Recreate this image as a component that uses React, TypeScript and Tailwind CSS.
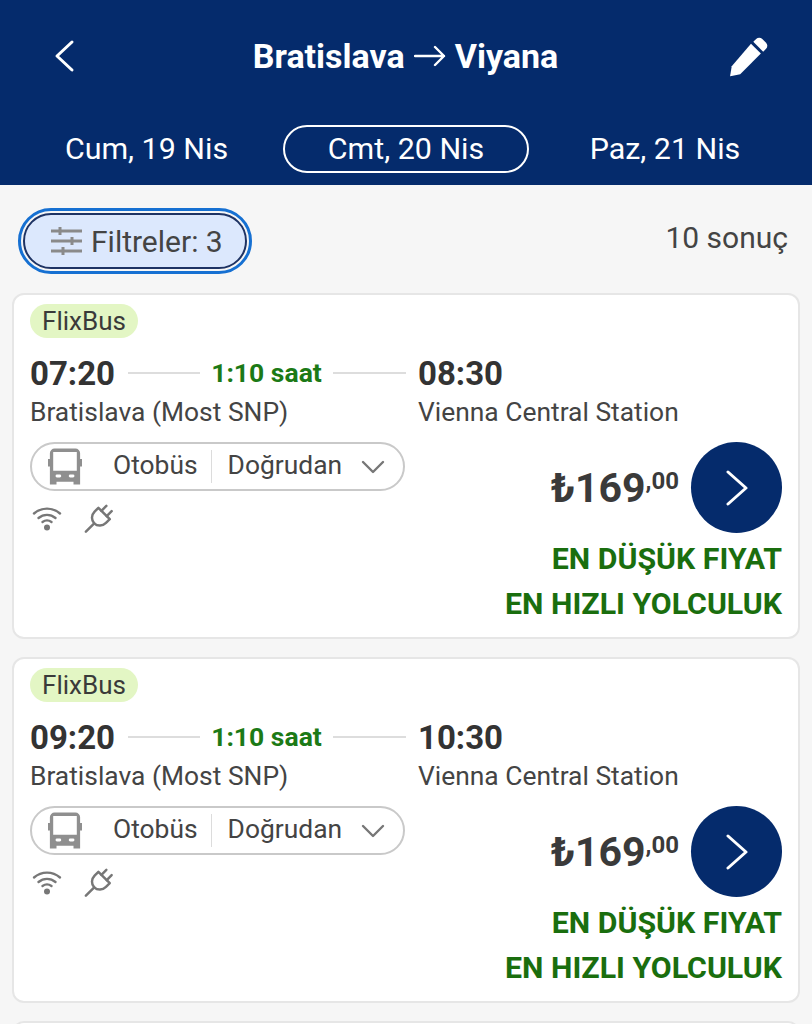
import React from "react";

function BusIcon() {
  return (
    <svg width="34" height="38" viewBox="0 0 36 39" className="shrink-0">
      <path fillRule="evenodd" fill="#8f8f8f" d="M7 0h22a5 5 0 0 1 5 5v6h2v8h-2v19h-7v-3H9v3H2V19H0v-8h2V5a5 5 0 0 1 5-5zM5.500 3.500v20h25v-20z" />
      <rect x="8" y="27.500" width="6" height="3" rx="1.500" fill="#fff" />
      <rect x="22" y="27.500" width="6" height="3" rx="1.500" fill="#fff" />
    </svg>
  );
}

function WifiIcon() {
  return (
    <svg width="30" height="26" viewBox="0 0 30 26" fill="none" stroke="#777" strokeWidth="2.4" strokeLinecap="round">
      <path d="M2 8.500C9.500 2 20.500 2 28 8.500" />
      <path d="M6.500 13c5-4.200 12-4.200 17 0" />
      <path d="M10.500 17c2.800-2 6.200-2 9 0" />
      <circle cx="15" cy="22.500" r="3" fill="#777" stroke="none" />
    </svg>
  );
}

function PlugIcon() {
  return (
    <svg width="30" height="30" viewBox="1 1 27 28" fill="none" stroke="#777" strokeWidth="2.3" strokeLinecap="round" strokeLinejoin="round">
      <g transform="rotate(45 15 15)">
        <path d="M15 22v11" />
        <path d="M7.500 9h15v5a7.500 8 0 0 1-15 0z" />
        <path d="M11.500 9V2.500M18.500 9V2.500" />
      </g>
    </svg>
  );
}

function Card({ dep, arr }: { dep: string; arr: string }) {
  return (
    <div className="h-[346px] shrink-0 rounded-[12px] border-2 border-[#e6e6e6] bg-white pl-[16px] pr-[16px] pt-[9px]">
      <div className="flex">
        <span className="flex h-[34px] w-[108px] items-center justify-center rounded-full bg-[#e3f6c4] text-[26px] text-[#3a3a3a]">FlixBus</span>
      </div>
      <div className="mt-[16px] flex">
        <div className="w-[388px] shrink-0">
          <div className="flex h-[38px] items-center">
            <span className="w-[98px] text-[33px] font-bold leading-none text-[#333]">{dep}</span>
            <span className="h-[2px] w-[72px] bg-[#dddddd]" />
            <span className="w-[133px] text-center text-[26.5px] font-bold leading-none text-[#1c7a16]">1:10 saat</span>
            <span className="h-[2px] w-[73px] bg-[#dddddd]" />
          </div>
          <div className="mt-[4px] text-[26.4px] leading-[32px] text-[#444]">Bratislava (Most SNP)</div>
        </div>
        <div>
          <div className="flex h-[38px] items-center text-[33px] font-bold leading-none text-[#333]">{arr}</div>
          <div className="mt-[4px] whitespace-nowrap text-[26.4px] leading-[32px] text-[#444]">Vienna Central Station</div>
        </div>
      </div>
      <div className="mt-[14px] flex justify-between">
        <div>
          <div className="flex h-[49px] w-[375px] items-center rounded-full border-2 border-[#c9c9c9] pl-[16px] text-[26.4px] text-[#444]">
            <BusIcon />
            <span className="mb-[2px] ml-[31px]">Otobüs</span>
            <span className="ml-[13px] h-[33px] w-[1px] bg-[#dcdcdc]" />
            <span className="mb-[2px] ml-[16px]">Doğrudan</span>
            <svg width="24" height="14" viewBox="0 0 24 14" fill="none" stroke="#777" strokeWidth="2.4" strokeLinecap="round" strokeLinejoin="round" className="ml-[19px]">
              <path d="M2 2l10 10L22 2" />
            </svg>
          </div>
          <div className="mt-[12px] flex items-center gap-[22px] pl-[2px]">
            <WifiIcon />
            <PlugIcon />
          </div>
        </div>
        <div className="flex flex-col items-end">
          <div className="flex items-center">
            <span className="flex items-start text-[#3a3a3a]">
              <span className="text-[41px] font-bold leading-[48px]">₺169</span>
              <span className="mt-[-1px] text-[24px] font-bold leading-[36px]">,00</span>
            </span>
            <span className="ml-[12px] flex h-[91px] w-[91px] items-center justify-center rounded-full bg-[#052b6c]">
              <svg width="26" height="36" viewBox="0 0 26 36" fill="none" stroke="#fff" strokeWidth="3" strokeLinecap="round" strokeLinejoin="round">
                <path d="M4 2l18 16L4 34" />
              </svg>
            </span>
          </div>
          <div className="mt-[3px] whitespace-nowrap text-[30.3px] font-bold leading-[45px] text-[#1a6e0e]">EN DÜŞÜK FIYAT</div>
          <div className="whitespace-nowrap text-[30.3px] font-bold leading-[45px] text-[#1a6e0e]">EN HIZLI YOLCULUK</div>
        </div>
      </div>
    </div>
  );
}

export default function App() {
  return (
    <div className="h-[1024px] w-[812px] overflow-hidden bg-[#f6f6f6] font-['Roboto',sans-serif]">
      <header className="h-[185px] bg-[#052b6c] text-white">
        <div className="flex h-[112px] items-center justify-between pl-[52px] pr-[41px]">
          <svg width="24" height="34" viewBox="0 0 24 34" fill="none" stroke="#fff" strokeWidth="3" strokeLinecap="round" strokeLinejoin="round">
            <path d="M20 3L5 17l15 14" />
          </svg>
          <h1 className="ml-[8px] flex items-center gap-[9px] text-[34px] font-bold leading-none">
            <span>Bratislava</span>
            <svg width="32" height="22" viewBox="0 0 32 22" fill="none" stroke="#fff" strokeWidth="2.4" strokeLinecap="round" strokeLinejoin="round">
              <path d="M1 11h29M21 2l9 9-9 9" />
            </svg>
            <span>Viyana</span>
          </h1>
          <svg width="44" height="44" viewBox="0 0 40 40" fill="#fff">
            <path d="M26.500 4.500a4 4 0 0 1 5.600 0l3.400 3.400a4 4 0 0 1 0 5.600l-2.600 2.600-9-9z" />
            <path d="M21.800 8.800l9 9L12 36.600 3 38.500l-.2-.2 1.500-8.900z" />
          </svg>
        </div>
        <nav className="mt-[13px] flex items-center text-[30.4px] leading-none">
          <div className="flex w-[283px] justify-center pl-[10px]">Cum, 19 Nis</div>
          <div className="flex h-[48px] w-[246px] items-center justify-center rounded-full border-2 border-white">Cmt, 20 Nis</div>
          <div className="flex w-[283px] justify-center pr-[11px]">Paz, 21 Nis</div>
        </nav>
      </header>
      <div className="flex h-[108px] items-center justify-between pl-[18px] pr-[24px]">
        <div className="mt-[4px] rounded-full border-[3px] border-[#1670d2] p-[2px]">
          <div className="flex h-[56px] w-[224px] items-center rounded-full border-2 border-[#1e3364] bg-[#dce8fd] pl-[25px] text-[30px] text-[#444]">
            <svg width="33" height="32" viewBox="0 0 33 32" stroke="#8a8a8a" strokeWidth="3" fill="none" className="shrink-0">
              <path d="M1 6h31M1 16h31M1 26h31" />
              <path d="M10 2v8M22 12v8M13 22v8" />
            </svg>
            <span className="ml-[8px] whitespace-nowrap">Filtreler: 3</span>
          </div>
        </div>
        <span className="mb-[4px] text-[30px] text-[#444]">10 sonuç</span>
      </div>
      <main className="flex flex-col gap-[18px] px-[12px]">
        <Card dep="07:20" arr="08:30" />
        <Card dep="09:20" arr="10:30" />
        <div className="h-[40px] shrink-0 rounded-[12px] border-2 border-[#e6e6e6] bg-white" />
      </main>
    </div>
  );
}
